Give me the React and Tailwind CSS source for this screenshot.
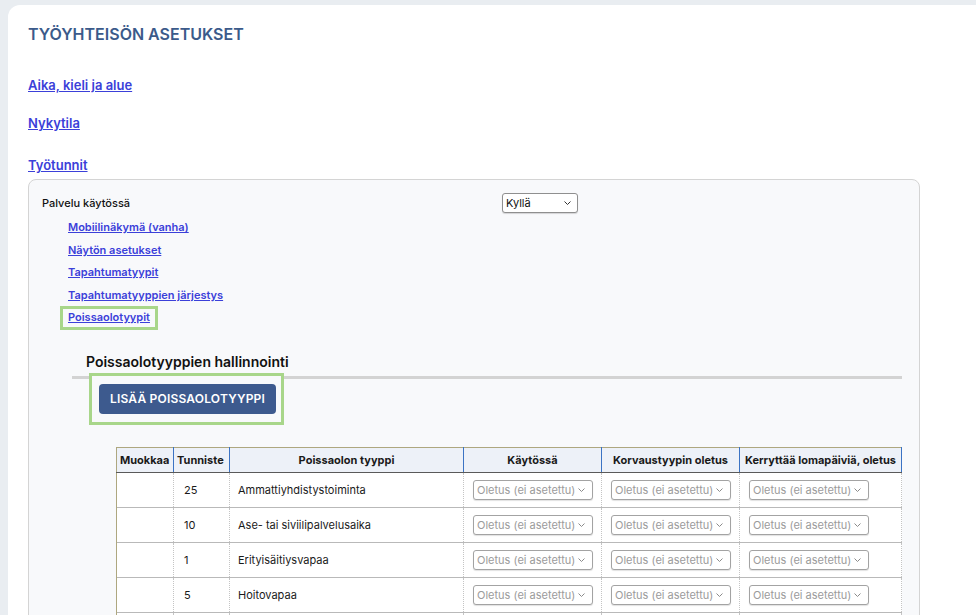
import React from "react";

const Chevron = ({ className = "" }) => (
  <svg width="7" height="4" viewBox="0 0 7 4" className={className} fill="none">
    <path d="M0.5 0.5 L3.5 3.5 L6.5 0.5" stroke="currentColor" strokeWidth="1" />
  </svg>
);

const FakeSelect = () => (
  <div className="ml-[9px] flex h-[20px] w-[120px] items-center justify-between rounded-[3px] border border-[#a3a3a3] bg-white pl-[3px] pr-[7px] text-[11px] leading-[14px] text-[#9b9b9b] shadow-[0_1px_1px_rgba(0,0,0,0.12)]">
    <span>Oletus (ei asetettu)</span>
    <Chevron className="text-[#8a8a8a]" />
  </div>
);

const rows = [
  ["25", "Ammattiyhdistystoiminta"],
  ["10", "Ase- tai siviilipalvelusaika"],
  ["1", "Erityisäitiysvapaa"],
  ["5", "Hoitovapaa"],
  ["3", "Isyysvapaa"],
  ["7", "Lomaraha"],
];

const sub = [
  "Mobiilinäkymä (vanha)",
  "Näytön asetukset",
  "Tapahtumatyypit",
  "Tapahtumatyyppien järjestys",
];

export default function App() {
  return (
    <div
      className="h-[615px] w-[976px] overflow-hidden bg-[#e9edf1] pl-[8px] pt-[5px]"
      style={{ fontFamily: "Inter, 'Noto Sans', sans-serif" }}
    >
      <div className="h-[700px] rounded-tl-[12px] bg-white pl-[20px] pt-[19px]">
        <h1 className="text-[16px] font-semibold leading-[20px] text-[#3b5a8a]">
          TYÖYHTEISÖN ASETUKSET
        </h1>
        <div className="mt-[33px] text-[13px] font-semibold leading-[16px] text-[#3b40d9]">
          <a className="underline">Aika, kieli ja alue</a>
        </div>
        <div className="mt-[22px] text-[13px] font-semibold leading-[16px] text-[#3b40d9]">
          <a className="underline">Nykytila</a>
        </div>
        <div className="mt-[26px] text-[13px] font-semibold leading-[16px] text-[#3b40d9]">
          <a className="underline">Työtunnit</a>
        </div>

        <div className="mt-[6px] w-[892px] rounded-[8px] border border-[#d4d4d4] bg-[#f8f9fb] pl-[13px] pr-[13px] pt-[13px] pb-[40px]">
          <div className="flex h-[20px] items-center">
            <div className="w-[460px] text-[11px] font-medium leading-[14px] text-[#111]">
              Palvelu käytössä
            </div>
            <div className="flex h-[20px] w-[76px] items-center justify-between rounded-[3px] border border-[#8f8f8f] bg-white pl-[3px] pr-[6px] text-[11px] leading-[14px] text-[#111] shadow-[0_1px_1px_rgba(0,0,0,0.15)]">
              <span>Kyllä</span>
              <Chevron className="text-[#333]" />
            </div>
          </div>

          <div className="ml-[26px] mt-[7px] text-[11px] font-semibold leading-[14px] text-[#3b40d9]">
            {sub.map((s) => (
              <div key={s} className="h-[22.5px]">
                <a className="underline">{s}</a>
              </div>
            ))}
            <div className="-ml-[8px] -mt-[4px] w-fit border-[3px] border-[#a8d68a] px-[5px] pt-[1px] pb-[3px]">
              <a className="underline">Poissaolotyypit</a>
            </div>
          </div>

          <div className="ml-[30px] mr-[4px] mt-[23px] border-b-[3px] border-[#d3d3d3] pb-[5px] pl-[14px] text-[14px] font-semibold leading-[18px] text-[#111]">
            Poissaolotyyppien hallinnointi
          </div>
          <div className="ml-[47px] -mt-[6px] w-[195px] border-[3px] border-[#a8d68a] bg-[#f8f9fb] pb-[8px] pl-[7px] pr-[5px] pt-[8px]">
            <button className="flex h-[30px] w-[177px] items-center justify-center rounded-[4px] bg-[#3d5a8e] text-[12px] font-semibold tracking-[0.2px] text-white">
              LISÄÄ POISSAOLOTYYPPI
            </button>
          </div>

          <table className="ml-[74px] mt-[22px] w-[785px] table-fixed border-collapse text-[11px] leading-[14px] text-[#1a1a1a]">
            <colgroup>
              <col className="w-[57px]" />
              <col className="w-[56px]" />
              <col className="w-[234px]" />
              <col className="w-[138px]" />
              <col className="w-[138px]" />
              <col className="w-[162px]" />
            </colgroup>
            <thead>
              <tr className="h-[25px] bg-[#edf1f8] font-bold">
                <th className="border-b border-l border-r border-t border-b-[#5a5a5a] border-l-[#aea77f] border-r-[#3b73c4] border-t-[#aea77f] px-[3px] text-left font-bold">
                  Muokkaa
                </th>
                <th className="border-b border-r border-t border-b-[#5a5a5a] border-r-[#3b73c4] border-t-[#aea77f] px-[3px] text-left font-bold">
                  Tunniste
                </th>
                <th className="border-b border-r border-t border-b-[#5a5a5a] border-r-[#3b73c4] border-t-[#aea77f] font-bold">
                  Poissaolon tyyppi
                </th>
                <th className="border-b border-r border-t border-b-[#5a5a5a] border-r-[#3b73c4] border-t-[#aea77f] font-bold">
                  Käytössä
                </th>
                <th className="border-b border-r border-t border-b-[#5a5a5a] border-r-[#3b73c4] border-t-[#aea77f] font-bold">
                  Korvaustyypin oletus
                </th>
                <th className="whitespace-nowrap border-b border-r border-t border-b-[#5a5a5a] border-r-[#3b73c4] border-t-[#aea77f] font-bold">
                  Kerryttää lomapäiviä, oletus
                </th>
              </tr>
            </thead>
            <tbody className="bg-white">
              {rows.map(([id, name]) => (
                <tr key={id} className="h-[35px] border-b border-[#b9b9b9]">
                  <td className="border-l border-l-[#aea77f]"></td>
                  <td className="border-l border-dotted border-l-[#c4c4c4] pl-[10px]">{id}</td>
                  <td className="border-l border-dotted border-l-[#c4c4c4] pl-[8px]">{name}</td>
                  <td className="border-l border-dotted border-l-[#c4c4c4]">
                    <FakeSelect />
                  </td>
                  <td className="border-l border-dotted border-l-[#c4c4c4]">
                    <FakeSelect />
                  </td>
                  <td className="border-l border-r border-dotted border-l-[#c4c4c4] border-r-[#c4c4c4]">
                    <FakeSelect />
                  </td>
                </tr>
              ))}
            </tbody>
          </table>
        </div>
      </div>
    </div>
  );
}
